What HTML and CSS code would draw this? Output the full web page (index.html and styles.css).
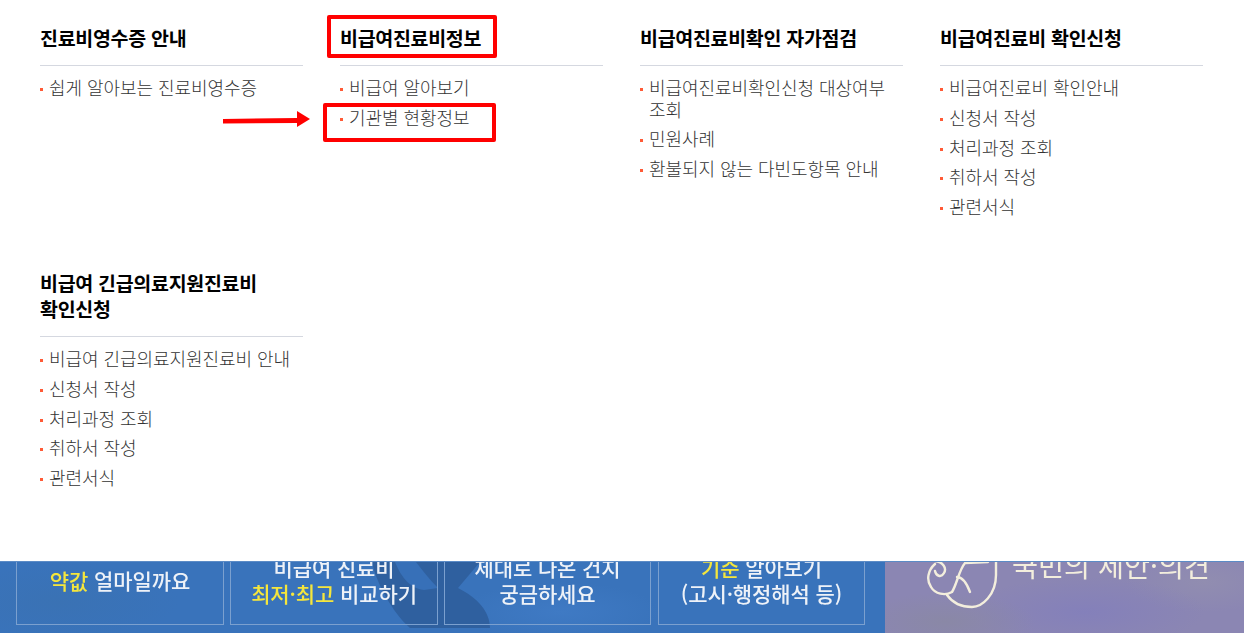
FILE: index.html
```html
<!DOCTYPE html>
<html lang="ko">
<head>
  <meta charset="UTF-8">
  <title>비급여진료비정보</title>
  <link rel="stylesheet" href="styles.css">
</head>
<body>

<div class="menu">
  <div class="menu-col">
    <h3 class="menu-title">진료비영수증 안내</h3>
    <ul class="menu-list">
      <li>쉽게 알아보는 진료비영수증</li>
    </ul>
    <svg class="mark-arrow" width="90" height="17" viewBox="0 0 90 17">
      <path d="M2 8 L76 7 L76 0 L89 8 L76 16 L76 12 L2 12.5 Z" fill="#f00"/>
    </svg>
  </div>
  <div class="menu-col">
    <h3 class="menu-title">비급여진료비정보</h3>
    <ul class="menu-list">
      <li>비급여 알아보기</li>
      <li>기관별 현황정보</li>
    </ul>
    <div class="mark-box mark-title"></div>
    <div class="mark-box mark-item"></div>
  </div>
  <div class="menu-col">
    <h3 class="menu-title">비급여진료비확인 자가점검</h3>
    <ul class="menu-list">
      <li>비급여진료비확인신청 대상여부 조회</li>
      <li>민원사례</li>
      <li>환불되지 않는 다빈도항목 안내</li>
    </ul>
  </div>
  <div class="menu-col">
    <h3 class="menu-title">비급여진료비 확인신청</h3>
    <ul class="menu-list">
      <li>비급여진료비 확인안내</li>
      <li>신청서 작성</li>
      <li>처리과정 조회</li>
      <li>취하서 작성</li>
      <li>관련서식</li>
    </ul>
  </div>
  <div class="menu-col">
    <h3 class="menu-title">비급여 긴급의료지원진료비<br>확인신청</h3>
    <ul class="menu-list">
      <li>비급여 긴급의료지원진료비 안내</li>
      <li>신청서 작성</li>
      <li>처리과정 조회</li>
      <li>취하서 작성</li>
      <li>관련서식</li>
    </ul>
  </div>
</div>

<div class="banner">
  <div class="banner-left">
    <svg class="banner-shape" width="885" height="71" viewBox="0 0 885 71">
      <path d="M372 0 C376 20 392 50 410 66 L490 66 C490 50 478 36 458 26 L480 0 Z" fill="#2f609f"/>
      <path d="M395 0 C400 12 408 26 424 28 L438 26 C430 18 422 8 416 0 Z" fill="#3770b8"/>
    </svg>
    <div class="banner-card"><p><em>약값</em> 얼마일까요</p></div>
    <div class="banner-card"><p>비급여 진료비</p><p><em>최저·최고</em> 비교하기</p></div>
    <div class="banner-card"><p>제대로 나온 건지</p><p>궁금하세요</p></div>
    <div class="banner-card"><p><em>기준</em> 알아보기</p><p>(고시·행정해석 등)</p></div>
  </div>
  <div class="banner-right">
    <svg class="banner-icon" width="80" height="60" viewBox="0 0 80 60">
      <g fill="none" stroke="#f3eedd" stroke-width="2.4" stroke-linecap="round">
        <path d="M71 1 L71 15 C71 35 57 47 47 47 C36 47 27 42 22 35"/>
        <path d="M10 4 C3 10 1 20 6 27 C10 34 20 36 27 32 C32 24 34 10 40 3 L63 2"/>
        <path d="M32 17 C38 17 42 24 45 32"/>
        <path d="M10 1 C18 2 22 8 19 13 C16 18 11 16 10 11"/>
      </g>
    </svg>
    <p class="banner-title">국민의 제안·의견</p>
  </div>
</div>

</body>
</html>
```

FILE: styles.css
```css
* {
  box-sizing: border-box;
}

html, body {
  height: 633px;
  overflow: hidden;
}

body {
  margin: 0;
  font-family: "Noto Sans CJK KR", "Noto Sans", sans-serif;
  background: #fff;
  color: #333;
}

.menu {
  height: 561px;
  padding: 0 40px;
  display: grid;
  grid-template-columns: repeat(4, 263px);
  column-gap: 37px;
  grid-template-rows: 245px auto;
}

.menu-col {
  position: relative;
}

.menu-title {
  margin: 0;
  padding: 25px 0 14px;
  font-size: 19.5px;
  line-height: 26px;
  font-weight: 700;
  color: #000;
  letter-spacing: -0.3px;
  border-bottom: 1px solid #d5d8e0;
}

.menu-list {
  list-style: none;
  margin: 11px 0 0;
  padding: 0;
}

.menu-list li {
  position: relative;
  padding: 0 10px 0 9px;
  margin-bottom: 8.25px;
  font-size: 18px;
  line-height: 21.5px;
  font-weight: 300;
  letter-spacing: -0.05px;
  color: #333;
}

.menu-list li::before {
  content: "";
  position: absolute;
  left: 0;
  top: 11px;
  width: 3px;
  height: 3px;
  background: #ff5a36;
}

/* red marks drawn over the menu */
.mark-box {
  position: absolute;
  border: 4px solid #f00;
  border-radius: 2px;
}

.mark-title {
  left: -13px;
  top: 15px;
  width: 170px;
  height: 43px;
}

.mark-item {
  left: -17px;
  top: 103px;
  width: 173px;
  height: 39px;
}

.mark-arrow {
  position: absolute;
  left: 181px;
  top: 111px;
}

.banner {
  height: 72px;
  display: flex;
  overflow: hidden;
  border-top: 1px solid #5b8bc6;
}

.banner-left {
  position: relative;
  width: 885px;
  height: 71px;
  padding: 0 0 8px 16px;
  display: flex;
  align-items: flex-end;
  gap: 6px;
  background:
    radial-gradient(ellipse 120px 40px at 60px 40px, #3a72b4 0%, transparent 100%),
    radial-gradient(ellipse 100px 30px at 560px 50px, #3f7ac4 0%, transparent 100%),
    #3973bb;
}

.banner-shape {
  position: absolute;
  left: 0;
  top: 0;
}

.banner-card {
  position: relative;
  flex: none;
  width: 208px;
  height: 90px;
  display: flex;
  flex-direction: column;
  justify-content: center;
  border: 1px solid #7ba0cf;
  color: #eef2f8;
  font-size: 21px;
  font-weight: 500;
  line-height: 26px;
  letter-spacing: -0.1px;
  text-align: center;
}

.banner-card:nth-child(4) {
  width: 207px;
}

.banner-card:nth-child(5) {
  width: 207px;
  margin-left: 1px;
}

.banner-card p {
  margin: 0;
  filter: blur(0.4px);
}

.banner-card em {
  font-style: normal;
  color: #f5e63c;
}

.banner-right {
  flex: 1;
  height: 71px;
  position: relative;
  background:
    radial-gradient(ellipse 90px 30px at 60px 60px, #8a88a6 0%, transparent 100%),
    radial-gradient(ellipse 120px 35px at 200px 50px, #8480ba 0%, transparent 100%),
    radial-gradient(ellipse 80px 30px at 320px 20px, #918db0 0%, transparent 100%),
    #8b86b3;
}

.banner-icon {
  position: absolute;
  left: 40px;
  top: -2px;
  filter: blur(0.3px);
}

.banner-title {
  position: absolute;
  margin: 0;
  left: 127px;
  top: -17px;
  font-size: 28.3px;
  line-height: 40px;
  color: #f3eedd;
  white-space: nowrap;
  filter: blur(0.3px);
}
```
